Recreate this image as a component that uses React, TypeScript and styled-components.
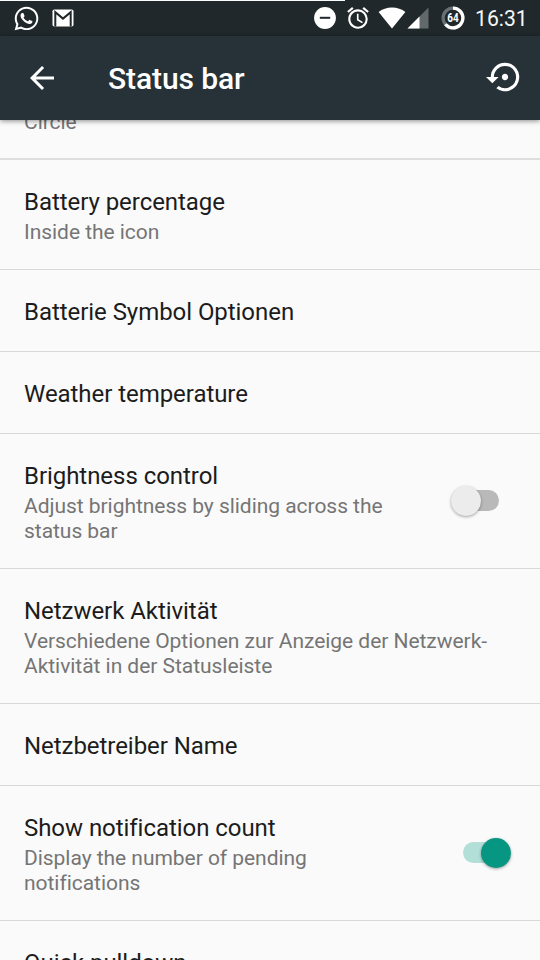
import React from 'react';
import styled, { createGlobalStyle } from 'styled-components';
import { MdAlarm, MdArrowBack, MdSettingsBackupRestore } from 'react-icons/md';
import { FaWhatsapp } from 'react-icons/fa';

const GlobalStyle = createGlobalStyle`
  * { box-sizing: border-box; }
  body { margin: 0; background: #fafafa; overflow: hidden; font-family: Roboto, 'Liberation Sans', sans-serif; }
`;

const Screen = styled.div`
  width: 540px;
  height: 960px;
  display: flex;
  flex-direction: column;
  overflow: hidden;
  background: #fafafa;
`;

const StatusBar = styled.header`
  height: 36px;
  flex: none;
  display: flex;
  align-items: flex-start;
  justify-content: space-between;
  background: linear-gradient(#fafcfc, #fafcfc) 0 0 / 345px 1px no-repeat, #20282b;
  color: #fff;
`;

const StatusGroup = styled.div<{ $start?: number }>`
  display: flex;
  height: 36px;
  align-items: center;
  padding-left: ${p => p.$start ?? 0}px;
  svg { display: block; flex: none; }
`;

const Slot = styled.span<{ $gap: number }>`
  display: flex;
  margin-left: ${p => p.$gap}px;
`;

const Clock = styled.time`
  width: 66px;
  padding-left: 1px;
  margin-left: 9px;
  padding-top: 2px;
  font-size: 21.2px;
  line-height: 36px;
  color: #f4f7f7;
`;

const Toolbar = styled.div`
  height: 84px;
  flex: none;
  display: flex;
  align-items: center;
  padding: 0 16.5px 0 24px;
  background: #263238;
  color: #fff;
  box-shadow: 0 1px 5px rgba(0, 0, 0, 0.45);
  z-index: 1;
`;

const IconButton = styled.button<{ $raise?: number }>`
  display: flex;
  padding: 0;
  margin-bottom: ${p => p.$raise ?? 0}px;
  border: 0;
  background: none;
  color: inherit;
`;

const Heading = styled.h1`
  flex: 1;
  margin: 2px 0 0 48px;
  font-size: 30px;
  font-weight: 500;
  line-height: 36px;
  letter-spacing: -0.1px;
`;

const List = styled.main`
  flex: 1;
  min-height: 0;
  overflow: hidden;
`;

const Row = styled.section<{ $height: number }>`
  height: ${p => p.$height}px;
  display: flex;
  justify-content: space-between;
  padding: 28px 24px 0;
  border-bottom: 1px solid #d9d9d9;
`;

const ClippedRow = styled.section`
  height: 40px;
  display: flex;
  align-items: flex-start;
  padding-left: 24px;
  border-bottom: 2px solid #dedede;
`;

const Copy = styled.div``;

const Title = styled.h2`
  margin: 0;
  font-size: 24px;
  font-weight: 400;
  line-height: 29px;
  letter-spacing: -0.05px;
  font-variant-ligatures: common-ligatures;
  color: #1c1c1c;
  white-space: nowrap;
`;

const Summary = styled.p<{ $clipped?: boolean }>`
  margin: ${p => (p.$clipped ? '-10px 0 0' : '3px 0 0')};
  font-size: 21px;
  line-height: 24.6px;
  letter-spacing: -0.04px;
  font-variant-ligatures: common-ligatures;
  color: #757575;
  white-space: pre-line;
`;

const Switch = styled.span<{ $on?: boolean }>`
  align-self: flex-start;
  display: flex;
  align-items: center;
  justify-content: ${p => (p.$on ? 'flex-end' : 'flex-start')};
  width: 44px;
  height: 21px;
  margin: 28px ${p => (p.$on ? 9 : 17)}px 0 0;
  border-radius: 11px;
  background: ${p => (p.$on ? '#b2dfd8' : '#b9b9b9')};
`;

const Thumb = styled.span<{ $on?: boolean }>`
  flex: none;
  width: 30px;
  height: 30px;
  margin: 0 ${p => (p.$on ? -4 : 0)}px 0 ${p => (p.$on ? 0 : -4)}px;
  border-radius: 50%;
  background: ${p => (p.$on ? '#079682' : '#ececec')};
  box-shadow: 0 1px 3px rgba(0, 0, 0, 0.36);
`;

const GmailIcon = () => (
  <svg width="22" height="18" viewBox="0 0 22 18">
    <rect x="0.5" y="0.5" width="21" height="17" rx="1.8" fill="#fff" />
    <path d="M3.3 17.5V3.2L11 9.6l7.7-6.4v14.3" fill="none" stroke="#20282b" strokeWidth="2" />
  </svg>
);

const InterruptionsIcon = () => (
  <svg width="22" height="22" viewBox="0 0 22 22">
    <circle cx="11" cy="11" r="10.9" fill="#fff" />
    <path d="M5.8 10.8h10.4" stroke="#20282b" strokeWidth="2" />
  </svg>
);

const WifiIcon = () => (
  <svg width="28" height="22" viewBox="0 0 28 22">
    <path d="M14 21.5 0.6 4.9C4.2 2.2 8.9 0.6 14 0.6s9.8 1.6 13.4 4.3Z" fill="#fff" />
  </svg>
);

const SignalIcon = () => (
  <svg width="22" height="22" viewBox="0 0 22 22">
    <path d="M0.5 21.5 21.5 0.5v21Z" fill="#62696c" />
    <path d="M0.5 21.5 12.5 9.5v12Z" fill="#fff" />
  </svg>
);

const BatteryIcon = () => (
  <svg width="24" height="24" viewBox="0 0 24 24">
    <circle cx="12" cy="12" r="9.9" fill="none" stroke="#687073" strokeWidth="3.2" />
    <circle cx="12" cy="12" r="9.9" fill="none" stroke="#fff" strokeWidth="3.2"
      pathLength="100" strokeDasharray="64 36" transform="rotate(-90 12 12)" />
    <text x="6.3" y="16.2" fontFamily="Roboto" fontWeight="700" fontSize="12"
      textLength="11.4" lengthAdjust="spacingAndGlyphs" fill="#fff">64</text>
  </svg>
);

interface Setting {
  title: string;
  summary?: string;
  height: number;
  on?: boolean;
}

const settings: Setting[] = [
  { title: 'Battery percentage', summary: 'Inside the icon', height: 110 },
  { title: 'Batterie Symbol Optionen', height: 82 },
  { title: 'Weather temperature', height: 82 },
  { title: 'Brightness control', summary: 'Adjust brightness by sliding across the\nstatus bar', height: 135, on: false },
  { title: 'Netzwerk Aktivität', summary: 'Verschiedene Optionen zur Anzeige der Netzwerk-\nAktivität in der Statusleiste', height: 135 },
  { title: 'Netzbetreiber Name', height: 82 },
  { title: 'Show notification count', summary: 'Display the number of pending\nnotifications', height: 135, on: true },
  { title: 'Quick pulldown', height: 82 },
];

export default function App() {
  return (
    <Screen>
      <GlobalStyle />
      <StatusBar>
        <StatusGroup $start={13}>
          <FaWhatsapp size={27} />
          <Slot $gap={11.5}><GmailIcon /></Slot>
        </StatusGroup>
        <StatusGroup>
          <InterruptionsIcon />
          <Slot $gap={8.5}><MdAlarm size={26} /></Slot>
          <Slot $gap={7}><WifiIcon /></Slot>
          <Slot $gap={1.5}><SignalIcon /></Slot>
          <Slot $gap={12}><BatteryIcon /></Slot>
          <Clock>16:31</Clock>
        </StatusGroup>
      </StatusBar>
      <Toolbar>
        <IconButton aria-label="Back" $raise={1}><MdArrowBack size={36} /></IconButton>
        <Heading>Status bar</Heading>
        <IconButton aria-label="Reset" $raise={2}><MdSettingsBackupRestore size={38} /></IconButton>
      </Toolbar>
      <List>
        <ClippedRow><Summary $clipped>Circle</Summary></ClippedRow>
        {settings.map(s => (
          <Row key={s.title} $height={s.height}>
            <Copy>
              <Title>{s.title}</Title>
              {s.summary && <Summary>{s.summary}</Summary>}
            </Copy>
            {s.on !== undefined && (
              <Switch $on={s.on} role="switch" aria-checked={s.on}><Thumb $on={s.on} /></Switch>
            )}
          </Row>
        ))}
      </List>
    </Screen>
  );
}
